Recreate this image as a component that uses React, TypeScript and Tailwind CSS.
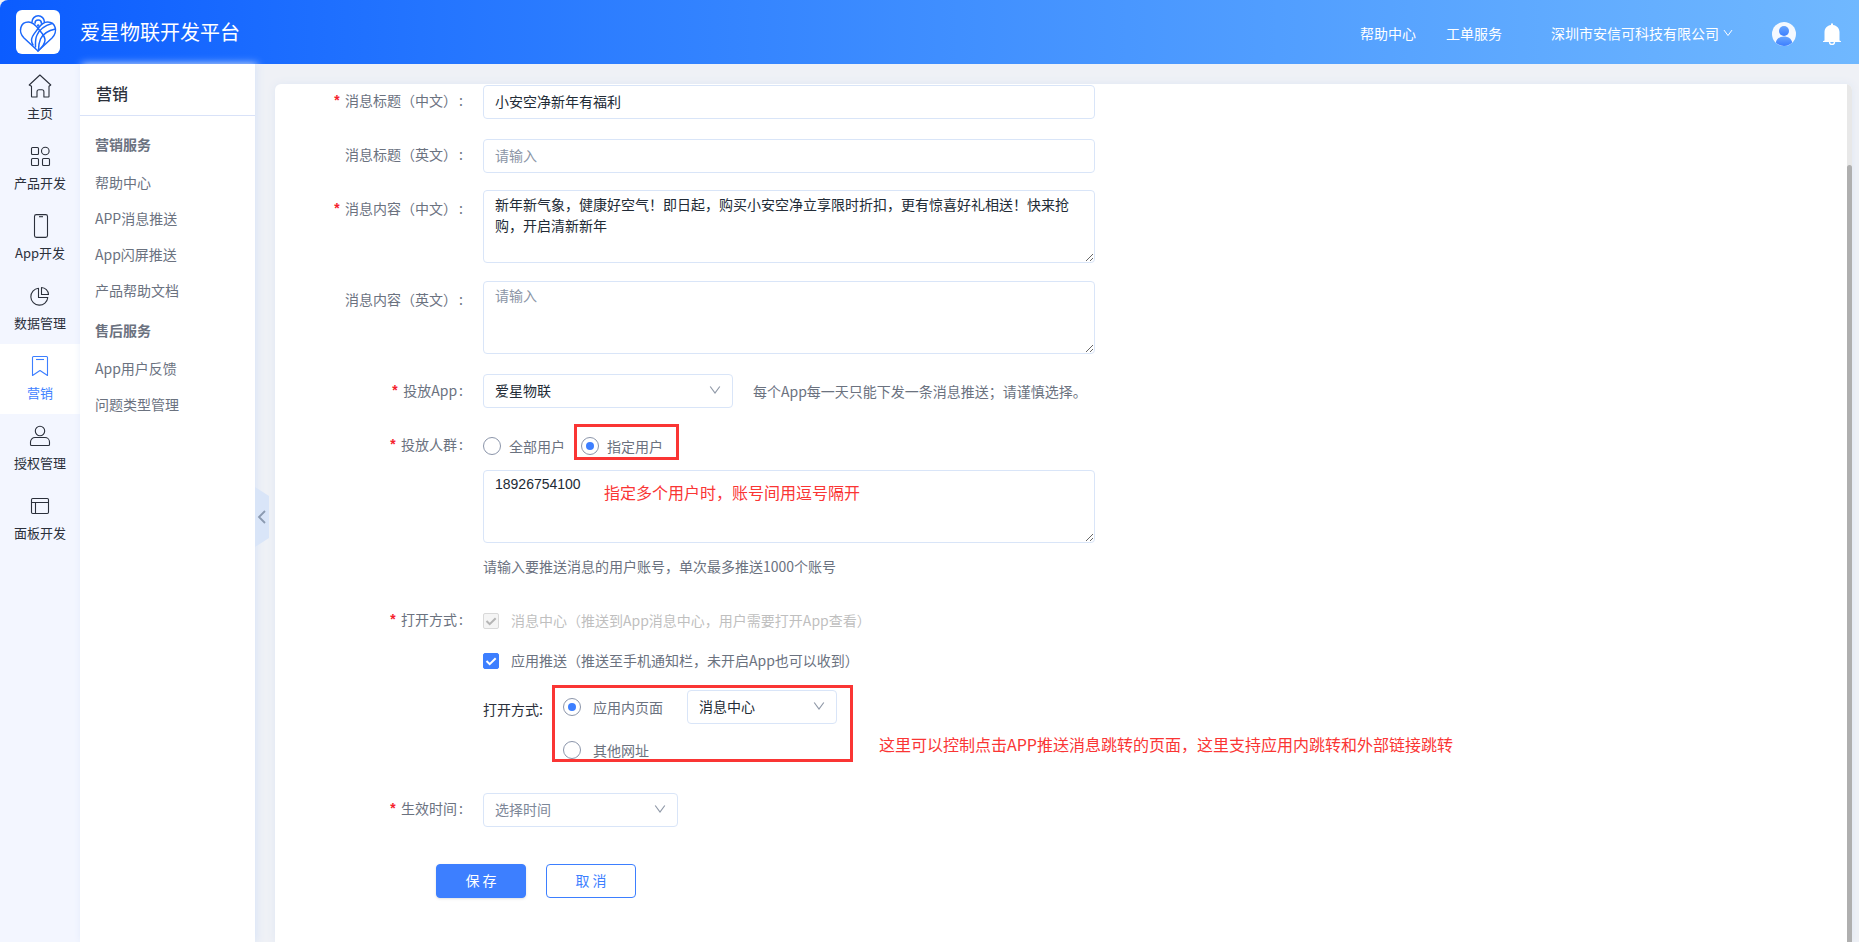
import { useState } from "react";
import type { ReactNode } from "react";
import clsx from "clsx";

const navItems = [
  { label: "主页", icon: <HomeIcon /> },
  { label: "产品开发", icon: <GridIcon /> },
  { label: "App开发", icon: <PhoneIcon /> },
  { label: "数据管理", icon: <PieIcon /> },
  { label: "营销", icon: <BookmarkIcon />, active: true },
  { label: "授权管理", icon: <UserIcon /> },
  { label: "面板开发", icon: <PanelIcon /> },
];

const menuGroups = [
  {
    title: "营销服务",
    items: ["帮助中心", "APP消息推送", "App闪屏推送", "产品帮助文档"],
  },
  {
    title: "售后服务",
    items: ["App用户反馈", "问题类型管理"],
  },
];

const fieldClass =
  "block w-full rounded border border-[#d9e5f8] bg-white px-[11px] text-sm outline-none placeholder:text-[#8b95a6] focus:border-[#3d7fff]";
const inputClass = "h-[34px] pb-0.5 text-[#222b36]";
const areaClass = "h-[73px] resize overflow-hidden pt-[3px] leading-[21px] text-[#222b36]";

function NavSvg({ children }: { children: ReactNode }) {
  return (
    <svg viewBox="0 0 24 24" className="size-6" fill="none" stroke="currentColor" strokeWidth="1.1" strokeLinejoin="round">
      {children}
    </svg>
  );
}

function HomeIcon() {
  return (
    <NavSvg>
      <path d="M1.2 11 11.9 1l10.9 10-1.8 1.2v10.3a.5.5 0 0 1-.5.5h-4.6v-5.2a2 2 0 0 0-2-2H11a2 2 0 0 0-2 2V23H4a.5.5 0 0 1-.5-.5V12.2z" />
    </NavSvg>
  );
}

function GridIcon() {
  return (
    <NavSvg>
      <rect x="3.5" y="3.5" width="7" height="7" rx="1" />
      <circle cx="17.3" cy="7" r="3.8" />
      <rect x="3.5" y="14.5" width="7" height="7" rx="1" />
      <rect x="14.5" y="14.5" width="7" height="7" rx="1" />
    </NavSvg>
  );
}

function PhoneIcon() {
  return (
    <NavSvg>
      <rect x="6.5" y=".6" width="13" height="22.8" rx="1.8" />
      <path d="M11 2.7h4" />
    </NavSvg>
  );
}

function PieIcon() {
  return (
    <NavSvg>
      <path d="M10.500 4.200a8.500 8.500 0 1 0 9.300 9.300H10.500z" />
      <path d="M13.500 3.500a7.300 7.300 0 0 1 7 7h-7z" />
    </NavSvg>
  );
}

function BookmarkIcon() {
  return (
    <NavSvg>
      <path d="M4.5 21.5v-18a1 1 0 0 1 1-1h13a1 1 0 0 1 1 1v18L12 16.5z" />
      <path d="M8 5.5h8" />
    </NavSvg>
  );
}

function UserIcon() {
  return (
    <NavSvg>
      <circle cx="12" cy="7" r="4.7" />
      <path d="M7 13.5h10a4.5 4.5 0 0 1 4.5 4.5v2.5a1 1 0 0 1-1 1h-17a1 1 0 0 1-1-1V18A4.5 4.5 0 0 1 7 13.5z" />
    </NavSvg>
  );
}

function PanelIcon() {
  return (
    <NavSvg>
      <rect x="3.5" y="4.5" width="17" height="15" rx="1.2" />
      <path d="M3.5 8.5h17M7.5 8.5v11" />
    </NavSvg>
  );
}

function Logo() {
  return (
    <svg viewBox="0 0 44 44" className="size-11 rounded-md bg-white" fill="none" stroke="#1c68fb" strokeWidth="1.5" strokeLinecap="round">
      <path d="M22 41 8 28C2 22 4 12 12.500 12c4.500 0 7 3 10 7 3 3.800 6.500 6.500 6.500 11 0 4-3 7.500-7 11z" />
      <path d="M22 41 36 28C42 22 40 12 31.500 12c-4 0-6.500 2.500-9 6-3.500 5-7 8-7 12 0 2 .5 3.500 1.500 5" />
      <path d="M36 13.500c-7 2-12.500 6-15 11.500-2 4-1.500 8.500-1.500 12" />
      <path d="M39.500 19c-7 1.500-12.500 4.500-15 10-1.500 3.500-2 7.500-2 11" />
      <path d="M16 12a6.200 6.200 0 0 1 12.400 0" />
      <path d="M19 13.200a3.200 3.200 0 0 1 6.400 0" />
      <circle cx="22.200" cy="15.600" r=".5" fill="#1c68fb" />
    </svg>
  );
}

function AvatarIcon() {
  return (
    <svg viewBox="0 0 24 24" className="size-6">
      <defs>
        <linearGradient id="avatar" x1="0" y1="0" x2="0" y2="1">
          <stop offset="0" stopColor="#68a6ff" />
          <stop offset="1" stopColor="#3c7eff" />
        </linearGradient>
      </defs>
      <circle cx="12" cy="12" r="12" fill="#f5f9ff" />
      <circle cx="12" cy="9" r="5" fill="url(#avatar)" />
      <path d="M3.800 20.500C4.500 16.500 8 14.500 12 14.500s7.500 2 8.200 6A12 12 0 0 1 12 24a12 12 0 0 1-8.200-3.500z" fill="url(#avatar)" />
    </svg>
  );
}

function BellIcon() {
  return (
    <svg viewBox="0 0 18 22" className="h-[22px] w-[18px]" fill="#fff">
      <path d="M8 1.200a1 1 0 0 1 2 0v.7c3.800.5 6.500 3.400 6.500 7.100v8.500l1.500.8v.7H0v-.7l1.500-.8V9c0-3.700 2.700-6.600 6.500-7.100z" />
      <path d="M6.500 19a2.500 2.500 0 0 0 5 0" fill="none" stroke="#fff" strokeWidth="1.400" />
    </svg>
  );
}

function Chevron({ className }: { className?: string }) {
  return (
    <svg viewBox="0 0 12 12" className={className} fill="none" stroke="currentColor" strokeWidth="1.200">
      <path d="M1.200 2.500 6 9l4.800-6.500" />
    </svg>
  );
}

type RowProps = {
  label: string;
  htmlFor?: string;
  required?: boolean;
  children: ReactNode;
};

function FormRow({ label, htmlFor, required, children }: RowProps) {
  return (
    <div className="flex items-start">
      <label htmlFor={htmlFor} className="w-52 shrink-0 pr-5 text-right text-sm leading-9 text-[#6b727f]">
        {required && <span className="mr-1 font-['Liberation_Mono',monospace] font-bold text-[#f5222d]">*</span>}
        {label}
        <span className="ml-0.5">:</span>
      </label>
      <div className="min-w-0 flex-1">{children}</div>
    </div>
  );
}

type SelectProps = {
  id: string;
  options: string[];
  className: string;
  muted?: boolean;
};

function Select({ id, options, className, muted }: SelectProps) {
  return (
    <div className={clsx("relative", className)}>
      <select
        id={id}
        aria-label={options[0]}
        className={clsx(fieldClass, "h-[34px] appearance-none pb-0.5", muted ? "text-[#7d8798]" : "text-[#222b36]")}
      >
        {options.map((option) => (
          <option key={option}>{option}</option>
        ))}
      </select>
      <Chevron className="pointer-events-none absolute top-2.5 right-3 size-3 text-[#9099a8]" />
    </div>
  );
}

type RadioProps = {
  name: string;
  label: string;
  checked: boolean;
  onChange: () => void;
  wide?: boolean;
};

function Radio({ name, label, checked, onChange, wide }: RadioProps) {
  return (
    <label className={clsx("flex h-[18px] items-center text-sm leading-4 text-[#6b727f]", wide ? "gap-3" : "gap-2")}>
      <input
        type="radio"
        name={name}
        checked={checked}
        onChange={onChange}
        className="grid size-[18px] appearance-none place-content-center rounded-full border border-[#8b95aa] bg-white before:size-2 before:rounded-full checked:before:bg-[#3d7fff]"
      />
      {label}
    </label>
  );
}

type CheckProps = {
  label: string;
  disabled?: boolean;
};

function Check({ label, disabled }: CheckProps) {
  return (
    <label className={clsx("flex h-10 items-center gap-3 text-sm", disabled ? "text-[#bfbfbf]" : "text-[#6b727f]")}>
      <span className="relative size-4">
        <input
          type="checkbox"
          defaultChecked
          disabled={disabled}
          className="peer block size-4 appearance-none rounded-xs border border-[#d9d9d9] bg-white checked:border-[#3d7fff] checked:bg-[#3d7fff] disabled:border-[#d9d9d9] disabled:bg-[#f5f5f5]"
        />
        <svg
          viewBox="0 0 16 16"
          className="pointer-events-none absolute inset-0 hidden size-4 text-white peer-checked:block peer-disabled:text-[#b5b5b5]"
          fill="none"
          stroke="currentColor"
          strokeWidth="2"
        >
          <path d="m3.500 8 3.200 3.200 6-6" />
        </svg>
      </span>
      <span className="pb-0.5">{label}</span>
    </label>
  );
}

export default function App() {
  const [audience, setAudience] = useState("some");
  const [target, setTarget] = useState("inner");

  return (
    <div className="flex h-screen flex-col overflow-hidden bg-[#eff1f6] font-['Noto_Sans_CJK_SC',sans-serif]">
      <header className="flex h-16 shrink-0 items-center rounded-tl-lg bg-linear-to-r from-[#0b5cff] to-[#70b8ff] pr-[18px] pl-4 text-white">
        <Logo />
        <h1 className="ml-5 text-xl">爱星物联开发平台</h1>
        <nav className="ml-auto flex items-center pt-1 text-sm">
          <a href="#help" className="pb-0.5">帮助中心</a>
          <a href="#ticket" className="ml-[30px] pb-0.5">工单服务</a>
          <button type="button" className="ml-[49px] flex items-center gap-1 pb-0.5">
            深圳市安信可科技有限公司
            <Chevron className="size-2.5" />
          </button>
          <button type="button" aria-label="账号" className="ml-[39px]">
            <AvatarIcon />
          </button>
          <button type="button" aria-label="通知" className="ml-[27px]">
            <BellIcon />
          </button>
        </nav>
      </header>

      <div className="flex min-h-0 flex-1">
        <nav className="w-20 shrink-0 bg-[#f3f6ff]">
          {navItems.map((item) => (
            <a
              key={item.label}
              href="#"
              className={clsx(
                "flex h-[70px] flex-col items-center gap-1.5 pt-2.5 text-[13px] leading-[18px]",
                item.active ? "bg-white text-[#3d7fff]" : "text-[#2b303b]"
              )}
            >
              {item.icon}
              {item.label}
            </a>
          ))}
        </nav>

        <aside className="relative z-10 w-[175px] shrink-0 bg-white shadow-[2px_0_8px_#dae5f7]">
          <h2 className="flex h-[52px] items-center border-b border-[#d9e2f8] px-4 pt-1.5 text-base font-medium text-[#2b303b]">营销</h2>
          <div className="px-[15px] pt-1.5 text-sm text-[#6b727f]">
            {menuGroups.map((group) => (
              <section key={group.title}>
                <h3 className="mt-0.5 font-bold leading-10">{group.title}</h3>
                {group.items.map((item) => (
                  <a key={item} href="#" className="block leading-9">
                    {item}
                  </a>
                ))}
              </section>
            ))}
          </div>
          <button type="button" aria-label="收起菜单" className="absolute top-[423px] left-full">
            <svg viewBox="0 0 14 60" className="h-[60px] w-3.5">
              <path d="M0 0 14 9v42L0 60z" fill="#d9e5f8" />
              <path d="m10 24-6 6 6 6" fill="none" stroke="#8b9ab0" strokeWidth="1.800" />
            </svg>
          </button>
        </aside>

        <main className="flex min-w-0 flex-1 pt-5 pr-[7px] pl-5">
          <div className="flex flex-1 overflow-hidden rounded-t-md bg-white shadow-[0_0_8px_#dfe7f3]">
            <form className="-mt-0.5 flex flex-1 flex-col gap-3.5" onSubmit={(e) => e.preventDefault()}>
              <FormRow label="消息标题（中文）" htmlFor="titleZh" required>
                <div className="max-w-[612px] py-[3px]">
                  <input id="titleZh" type="text" defaultValue="小安空净新年有福利" className={clsx(fieldClass, inputClass)} />
                </div>
              </FormRow>

              <FormRow label="消息标题（英文）" htmlFor="titleEn">
                <div className="max-w-[612px] py-[3px]">
                  <input id="titleEn" type="text" placeholder="请输入" className={clsx(fieldClass, inputClass)} />
                </div>
              </FormRow>

              <FormRow label="消息内容（中文）" htmlFor="contentZh" required>
                <div className="max-w-[612px] pb-1">
                  <textarea
                    id="contentZh"
                    defaultValue="新年新气象，健康好空气！即日起，购买小安空净立享限时折扣，更有惊喜好礼相送！快来抢购，开启清新新年"
                    className={clsx(fieldClass, areaClass)}
                  />
                </div>
              </FormRow>

              <FormRow label="消息内容（英文）" htmlFor="contentEn">
                <div className="max-w-[612px] pb-1">
                  <textarea id="contentEn" placeholder="请输入" className={clsx(fieldClass, areaClass)} />
                </div>
              </FormRow>

              <FormRow label="投放App" htmlFor="app" required>
                <div className="flex h-[38px] items-center gap-5 text-sm text-[#6b727f]">
                  <Select id="app" options={["爱星物联"]} className="w-[250px]" />
                  每个App每一天只能下发一条消息推送；请谨慎选择。
                </div>
              </FormRow>

              <div className="pt-0.5">
                <FormRow label="投放人群" required>
                  <div className="flex h-10 items-center gap-4">
                    <Radio name="audience" label="全部用户" checked={audience === "all"} onChange={() => setAudience("all")} />
                    <div className="relative">
                      <Radio name="audience" label="指定用户" checked={audience === "some"} onChange={() => setAudience("some")} />
                      <span className="pointer-events-none absolute -top-[13px] -right-4 -left-[7px] h-9 border-3 border-[#fa3534]" />
                    </div>
                  </div>
                  <div className="relative mt-1 max-w-[612px]">
                    <textarea
                      aria-label="用户账号"
                      defaultValue="18926754100"
                      className={clsx(fieldClass, areaClass, "font-['Liberation_Sans',sans-serif]")}
                    />
                    <p className="pointer-events-none absolute top-2.5 left-[121px] text-base text-[#fa3534]">
                      指定多个用户时，账号间用逗号隔开
                    </p>
                  </div>
                  <p className="mt-1 text-sm leading-[38px] text-[#6b727f]">请输入要推送消息的用户账号，单次最多推送1000个账号</p>
                </FormRow>
              </div>

              <div className="pt-0.5">
                <FormRow label="打开方式" required>
                  <Check label="消息中心（推送到App消息中心，用户需要打开App查看）" disabled />
                  <Check label="应用推送（推送至手机通知栏，未开启App也可以收到）" />
                  <div className="mt-1 mb-3.5 flex items-start">
                    <span className="w-[69px] text-sm leading-[48px] text-[#2b303b]">打开方式:</span>
                    <div className="flex h-[77px] w-[301px] flex-col justify-between border-3 border-[#fa3534] pl-2">
                      <div className="flex h-[38px] items-center gap-6">
                        <Radio name="target" label="应用内页面" checked={target === "inner"} onChange={() => setTarget("inner")} wide />
                        <Select id="page" options={["消息中心"]} className="w-[150px]" />
                      </div>
                      <Radio name="target" label="其他网址" checked={target === "url"} onChange={() => setTarget("url")} wide />
                    </div>
                    <p className="ml-[26px] self-end pb-1.5 text-base text-[#fa3534]">
                      这里可以控制点击APP推送消息跳转的页面，这里支持应用内跳转和外部链接跳转
                    </p>
                  </div>
                </FormRow>
              </div>

              <FormRow label="生效时间" htmlFor="time" required>
                <div className="py-[3px]">
                  <Select id="time" options={["选择时间"]} className="w-[195px]" muted />
                </div>
              </FormRow>

              <div className="mt-5 flex gap-5 pl-[161px] text-sm">
                <button type="submit" className="h-[34px] w-[90px] rounded border border-[#3d7fff] bg-[#3d7fff] pb-0.5 text-white shadow-sm">
                  保 存
                </button>
                <button type="button" className="h-[34px] w-[90px] rounded border border-[#3d7fff] bg-white pb-0.5 text-[#3d7fff]">
                  取 消
                </button>
              </div>
            </form>
            <div className="w-[5px] shrink-0 bg-[#e8e8e8] pt-[81px]">
              <div className="h-full rounded-t-full bg-[#afafaf]" />
            </div>
          </div>
        </main>
      </div>
    </div>
  );
}
